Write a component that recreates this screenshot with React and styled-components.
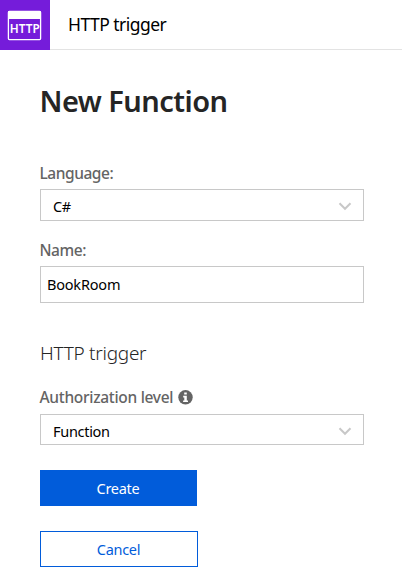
import React from 'react';
import styled, { createGlobalStyle } from 'styled-components';

const GlobalStyle = createGlobalStyle`
  * { box-sizing: border-box; }
  body {
    margin: 0;
    background: #fff;
    color: #000;
    font-family: 'Noto Sans', 'Open Sans', sans-serif;
  }
`;

const Panel = styled.main`
  width: 402px;
  height: 576px;
  overflow: hidden;
  background: #fff;
`;

const Header = styled.header`
  display: flex;
  height: 50px;
`;

const HeaderTitle = styled.div`
  flex: 1;
  height: 50px;
  padding-left: 18px;
  border-bottom: 1px solid #e3e3e3;
  font-size: 17.5px;
  line-height: 49px;
  letter-spacing: -0.53px;
  white-space: nowrap;
`;

const HttpTile = styled.svg`
  display: block;
  width: 50px;
  height: 50px;
  background: #751cda;
`;

const Form = styled.form`
  display: flex;
  flex-direction: column;
  width: 324px;
  margin-left: 40px;
`;

const Title = styled.h1`
  margin: 30px 0 0 -0.5px;
  font-size: 29px;
  font-weight: 600;
  line-height: 42px;
  letter-spacing: -0.55px;
  color: #252525;
  white-space: nowrap;
`;

const Subtitle = styled.h2`
  margin: 37px 0 0;
  font-size: 19px;
  font-weight: 300;
  line-height: 26px;
  letter-spacing: -0.27px;
  color: #252525;
`;

const Label = styled.label`
  display: flex;
  align-items: center;
  height: 22px;
  margin-top: ${(p) => p.$top}px;
  margin-left: -0.5px;
  font-size: 15.5px;
  font-weight: 500;
  letter-spacing: ${(p) => p.$spacing || '-0.45px'};
  color: #646464;
  white-space: nowrap;

  svg { margin-left: 5px; }
`;

const Field = styled.div`
  display: flex;
  align-items: center;
  justify-content: space-between;
  height: ${(p) => p.$height}px;
  margin-top: ${(p) => p.$top}px;
  padding: ${(p) => p.$padding};
  border: 1px solid #c8c8c8;
  font-size: 14.5px;
  line-height: 20px;
  letter-spacing: ${(p) => p.$spacing || '-0.3px'};
`;

const Button = styled.button`
  width: ${(p) => (p.$primary ? 157 : 158)}px;
  height: 36px;
  margin-top: 25px;
  padding: 0 1px 0 0;
  border: 1px solid #015cda;
  border-radius: 0;
  background: ${(p) => (p.$primary ? '#015cda' : '#fff')};
  color: ${(p) => (p.$primary ? '#fff' : '#015cda')};
  font: 400 14.5px/34px 'Noto Sans', 'Open Sans', sans-serif;
  letter-spacing: -0.3px;
`;

const HttpIcon = () => (
  <HttpTile viewBox="0 0 50 50">
    <rect x="8.4" y="11.4" width="32.2" height="28.2" rx="1" fill="none" stroke="#fff" strokeWidth="1.3" />
    <path d="M8 12q0-1 1-1h31q1 0 1 1v7H8z" fill="#fff" />
    <text
      x="9.8"
      y="32.8"
      fill="#fff"
      fontFamily="'Noto Sans', sans-serif"
      fontSize="12.5"
      fontWeight="600"
      textLength="30"
      lengthAdjust="spacingAndGlyphs"
    >
      HTTP
    </text>
  </HttpTile>
);

const Chevron = () => (
  <svg width="14" height="10" viewBox="0 0 14 10">
    <path d="M1.5 2.3 7 7.8l5.5-5.5" fill="none" stroke="#c8c8c8" strokeWidth="2" />
  </svg>
);

const InfoIcon = () => (
  <svg width="15" height="15" viewBox="0 0 15 15">
    <circle cx="7.5" cy="7.3" r="7.2" fill="#646464" />
    <path d="M6.2 2.4h2.6v2H6.2zM5.2 5.8h3.6v4.6h1.2v1.7H5.1v-1.7h1.2V7.4H5.2z" fill="#fff" />
  </svg>
);

export default function App() {
  return (
    <Panel>
      <GlobalStyle />
      <Header>
        <HttpIcon />
        <HeaderTitle>HTTP trigger</HeaderTitle>
      </Header>
      <Form>
        <Title>New Function</Title>
        <Label $top={40}>Language:</Label>
        <Field $height={32} $top={5} $padding="2px 11px 0 12px">
          <span>C#</span>
          <Chevron />
        </Field>
        <Label $top={18}>Name:</Label>
        <Field $height={37} $top={5} $padding="0 6px 1px" $spacing="-0.2px">BookRoom</Field>
        <Subtitle>HTTP trigger</Subtitle>
        <Label $top={20} $spacing="-0.3px">
          Authorization level
          <InfoIcon />
        </Label>
        <Field $height={31} $top={6} $padding="2px 11px 0 12px">
          <span>Function</span>
          <Chevron />
        </Field>
        <Button type="button" $primary>Create</Button>
        <Button type="button">Cancel</Button>
      </Form>
    </Panel>
  );
}
